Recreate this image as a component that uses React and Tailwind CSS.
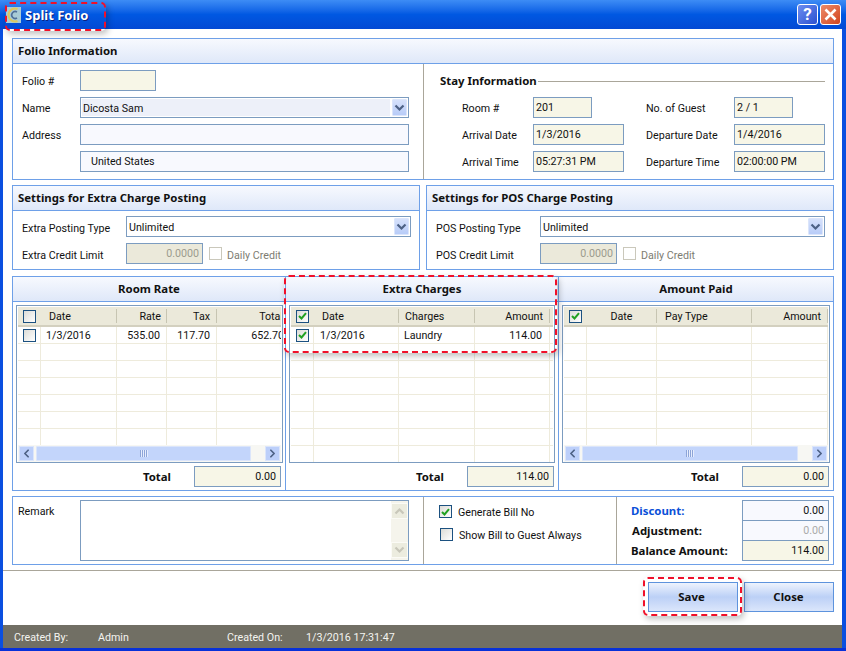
import { ChevronLeft, ChevronRight } from 'lucide-react';

const boldText = "font-['Noto_Sans',sans-serif] font-bold text-[11.4px]";

const Chevron = ({ color = '#4d6185' }) => (
  <svg width="11" height="8" viewBox="0 0 11 8" fill="none" stroke={color} strokeWidth="2.2">
    <path d="M1.5 1.5 L5.5 5.5 L9.5 1.5" />
  </svg>
);

function Check({ checked, disabled, className = '' }) {
  if (disabled) return <span className={'block w-[13px] h-[13px] border border-[#cac8bb] bg-white ' + className} />;
  return (
    <span className={'flex items-center justify-center w-[13px] h-[13px] border border-[#1c5180] bg-gradient-to-br from-[#dcdcd7] to-white ' + className}>
      {checked && (
        <svg width="9" height="8" viewBox="0 0 9 8" fill="none" stroke="#21a121" strokeWidth="2">
          <path d="M1 4 L3.5 6.5 L8 1.2" />
        </svg>
      )}
    </span>
  );
}

function Field({ children, className = '', tone = 'cream', align = 'left' }) {
  const bg = tone === 'cream' ? 'bg-[#f7f6e7]' : tone === 'gray' ? 'bg-[#ebe9da]' : tone === 'white' ? 'bg-white' : 'bg-[#f8f9fe]';
  return (
    <div className={`flex items-center h-[21px] px-[2px] pt-[2px] border border-[#7c9cc0] ${bg} ${align === 'right' ? 'justify-end' : ''} ${className}`}>
      {children}
    </div>
  );
}

function Combo({ text, className = '', bg = 'bg-white' }) {
  return (
    <div className={`flex items-center h-[21px] border border-[#7c9cc0] bg-white pl-px pr-px py-px ${className}`}>
      <div className={`flex-1 h-full flex items-center pl-[1px] pt-[4px] ${bg}`}>{text}</div>
      <div className="flex items-center justify-center w-[15px] h-full ml-[2px] rounded-[1px] border border-[#dbe5fb] bg-gradient-to-b from-[#d6e1fb] to-[#b8ccf8]">
        <Chevron />
      </div>
    </div>
  );
}

function Panel({ title, children, className = '', center }) {
  return (
    <div className={`flex flex-col border border-[#6ea0e8] ${className}`}>
      {title && <PanelHead center={center}>{title}</PanelHead>}
      {children}
    </div>
  );
}

function PanelHead({ children, center }) {
  return (
    <div className={`flex items-center shrink-0 h-[25px] pb-px px-[5px] border-b border-[#6ea0e8] bg-gradient-to-b from-[#f7f9fe] to-[#dfe8f9] ${boldText} ${center ? 'justify-center' : ''}`}>
      {children}
    </div>
  );
}

function InfoRow({ label, labelClass, children }) {
  return (
    <div className="flex items-center">
      <span className={labelClass}>{label}</span>
      {children}
    </div>
  );
}

function HScroll() {
  return (
    <div className="flex items-center h-[17px] gap-[2px] px-[1px] bg-[#f7f7f3]">
      <div className="flex items-center justify-center w-[15px] h-[15px] bg-[#bccffa] border border-[#dbe5fb]">
        <ChevronLeft size={13} strokeWidth={3.2} color="#4d6185" />
      </div>
      <div className="flex-1 flex items-center justify-center h-[15px] rounded-[1px] border border-[#dbe5fb] bg-[#c3d5fb]">
        <div className="w-[8px] h-[7px] bg-[repeating-linear-gradient(90deg,#8da5d8_0,#8da5d8_1px,#e6edfd_1px,#e6edfd_2px)]" />
      </div>
      <div className="w-[10px]" />
      <div className="flex items-center justify-center w-[15px] h-[15px] bg-[#bccffa] border border-[#dbe5fb]">
        <ChevronRight size={13} strokeWidth={3.2} color="#4d6185" />
      </div>
    </div>
  );
}

function Grid({ columns, rows, rowCount, scroll, headCheck, rowCheck }) {
  return (
    <div className="flex flex-col h-full border border-[#7c9cc0] pt-px px-px">
      <div className="flex h-[20px] overflow-hidden border-b-2 border-[#d3d0bf] bg-[#ebe9da]">
        <div className="flex items-center justify-center w-[23px] shrink-0"><Check checked={headCheck} /></div>
        {columns.map((c, k) => (
          <div key={k} className={`flex items-center shrink-0 ${c.w}`}>
            <div className={`flex flex-1 items-center h-[14px] border-r border-[#c7c5b2] ${c.headClass}`}>
              <span className="whitespace-nowrap pt-[2px]">{c.label}</span>
            </div>
          </div>
        ))}
      </div>
      <div className="flex flex-col flex-1 min-h-0 overflow-hidden">
        {Array.from({ length: rowCount }).map((_, i) => (
          <div key={i} className="flex h-[17px] shrink-0 overflow-hidden border-b border-[#eeebdc]">
            <div className="flex items-center justify-center w-[23px] shrink-0 border-r border-[#eeebdc]">
              {rows[i] && <Check checked={rowCheck} />}
            </div>
            {columns.map((c, k) => (
              <div key={k} className={`flex items-center shrink-0 pt-[3px] whitespace-nowrap border-r border-[#eeebdc] ${c.w} ${c.cellClass}`}>
                {rows[i] && rows[i][k]}
              </div>
            ))}
          </div>
        ))}
      </div>
      {scroll && <HScroll />}
    </div>
  );
}

function TotalRow({ value }) {
  return (
    <div className="flex items-center justify-end h-[21px] mt-[3px] pr-[4px]">
      <span className={`mr-[23px] ${boldText}`}>Total</span>
      <Field align="right" className="w-[87px]"><span className="pr-[2px]">{value}</span></Field>
    </div>
  );
}

function SettingsPanel({ title, typeLabel, limitLabel }) {
  return (
    <Panel title={title} className="w-[408px] h-[85px]">
      <div className="flex flex-col gap-[6px] pt-[5px] pl-[9px] pr-[8px]">
        <InfoRow label={typeLabel} labelClass="w-[104px] pt-[5px]">
          <Combo text="Unlimited" className="flex-1" />
        </InfoRow>
        <InfoRow label={limitLabel} labelClass="w-[104px] pt-[5px]">
          <Field tone="gray" align="right" className="w-[77px] text-[#9c9b8e]"><span className="pr-[1px]">0.0000</span></Field>
          <Check disabled className="ml-[6px]" />
          <span className="ml-[5px] pt-[5px] text-[#7d7c72]">Daily Credit</span>
        </InfoRow>
      </div>
    </Panel>
  );
}

const redBox = 'absolute border-2 border-dashed border-[#f0102a] rounded-[5px] shadow-[2px_3px_6px_rgba(0,0,0,0.25)] pointer-events-none';

const roomCols = [
  { label: 'Date', w: 'w-[76px]', headClass: 'justify-start pl-[8px]', cellClass: 'justify-start pl-[5px]' },
  { label: 'Rate', w: 'w-[50px]', headClass: 'justify-end pr-[5px]', cellClass: 'justify-end pr-[6px]' },
  { label: 'Tax', w: 'w-[50px]', headClass: 'justify-end pr-[6px]', cellClass: 'justify-end pr-[6px]' },
  { label: 'Total', w: 'w-[71px]', headClass: 'justify-end pr-[4px]', cellClass: 'justify-end pr-[3px]' },
];
const extraCols = [
  { label: 'Date', w: 'w-[85px]', headClass: 'justify-start pl-[8px]', cellClass: 'justify-start pl-[6px]' },
  { label: 'Charges', w: 'w-[76px]', headClass: 'justify-start pl-[6px]', cellClass: 'justify-start pl-[5px]' },
  { label: 'Amount', w: 'w-[75px]', headClass: 'justify-end pr-[6px]', cellClass: 'justify-end pr-[7px]' },
];
const paidCols = [
  { label: 'Date', w: 'w-[70px]', headClass: 'justify-center', cellClass: '' },
  { label: 'Pay Type', w: 'w-[95px]', headClass: 'justify-start pl-[8px]', cellClass: '' },
  { label: 'Amount', w: 'w-[76px]', headClass: 'justify-end pr-[6px]', cellClass: '' },
];

export default function App() {
  return (
    <div className="relative flex flex-col w-[846px] h-[651px] overflow-hidden bg-[#0a4fe0] text-[10.7px] leading-none text-[#111] font-['Roboto',sans-serif]">
      {/* Title bar */}
      <div className="flex items-center shrink-0 h-[29px] pl-[6px] pr-[5px] bg-gradient-to-b from-[#3d8cf5] via-[#0058e2] to-[#0349d4]">
        <svg width="15" height="16" viewBox="0 0 15 16" fill="none">
          <rect width="15" height="16" fill="#a9cbd6" />
          <path d="M11.5 2 A6.5 6.5 0 1 0 11.5 14" stroke="#dcc85e" strokeWidth="2" />
          <path d="M11 5 A3.5 3.5 0 1 0 11 11" stroke="#4f6f99" strokeWidth="1.6" />
        </svg>
        <span className="ml-[4px] pt-px font-['Noto_Sans',sans-serif] font-bold text-[13px] text-white [text-shadow:1px_1px_0_#0a1f80]">Split Folio</span>
        <div className="ml-auto flex gap-[2px]">
          <div className="flex items-center justify-center w-[21px] h-[21px] rounded-[3px] border border-white bg-gradient-to-br from-[#6d8df0] to-[#2b50d0] text-white font-bold text-[17px]">?</div>
          <div className="flex items-center justify-center w-[21px] h-[21px] rounded-[3px] border border-white bg-gradient-to-br from-[#ec8a68] to-[#d2431c]">
            <svg width="13" height="13" viewBox="0 0 13 13" stroke="white" strokeWidth="2.6"><path d="M1.5 1.5 L11.5 11.5 M11.5 1.5 L1.5 11.5" /></svg>
          </div>
        </div>
      </div>

      {/* Window body */}
      <div className="flex flex-col flex-1 min-h-0 ml-[3px] mr-[4px] bg-white">
        <div className="flex flex-col pt-[9px] pl-[9px] pr-[8px]">
          {/* Folio + Stay */}
          <Panel title="Folio Information" className="h-[142px]">
            <div className="flex flex-1 min-h-0">
              <div className="flex flex-col gap-[6px] w-[411px] pt-[6px] pl-[9px] pr-[14px] border-r border-[#aaa69a]">
                <InfoRow label="Folio #" labelClass="w-[58px] pt-[3px]"><Field className="w-[76px]" /></InfoRow>
                <InfoRow label="Name" labelClass="w-[58px] pt-[3px]"><Combo text="Dicosta Sam" className="flex-1" bg="bg-[#edf0f9]" /></InfoRow>
                <InfoRow label="Address" labelClass="w-[58px] pt-[3px]"><Field tone="pale" className="flex-1" /></InfoRow>
                <InfoRow label="" labelClass="w-[58px]"><Field tone="pale" className="flex-1 pl-[10px]">United States</Field></InfoRow>
              </div>
              <div className="flex-1 flex flex-col pt-[11px] pl-[16px] pr-[8px]">
                <div className={`flex items-center h-[12px] ${boldText}`}>
                  <span>Stay Information</span>
                  <span className="flex-1 h-px ml-[1px] bg-[#aaa69a]" />
                </div>
                <div className="grid grid-cols-[206px_1fr] gap-y-[6px] mt-[10px]">
                  <div className="flex items-center pl-[22px]"><span className="w-[71px] pt-[4px]">Room #</span><Field className="w-[59px]">201</Field></div>
                  <div className="flex items-center"><span className="w-[88px] pt-[4px]">No. of Guest</span><Field className="w-[59px]">2 / 1</Field></div>
                  <div className="flex items-center pl-[22px]"><span className="w-[71px] pt-[4px]">Arrival Date</span><Field className="w-[91px]">1/3/2016</Field></div>
                  <div className="flex items-center"><span className="w-[88px] pt-[4px]">Departure Date</span><Field className="w-[91px]">1/4/2016</Field></div>
                  <div className="flex items-center pl-[22px]"><span className="w-[71px] pt-[4px]">Arrival Time</span><Field className="w-[91px]">05:27:31 PM</Field></div>
                  <div className="flex items-center"><span className="w-[88px] pt-[4px]">Departure Time</span><Field className="w-[91px]">02:00:00 PM</Field></div>
                </div>
              </div>
            </div>
          </Panel>

          {/* Posting settings */}
          <div className="flex gap-[6px] mt-[5px]">
            <SettingsPanel title="Settings for Extra Charge Posting" typeLabel="Extra Posting Type" limitLabel="Extra Credit Limit" />
            <SettingsPanel title="Settings for POS Charge Posting" typeLabel="POS Posting Type" limitLabel="POS Credit Limit" />
          </div>

          {/* Charge grids */}
          <Panel className="h-[215px] mt-[6px]">
            <div className="flex flex-1 min-h-0">
              <div className="flex flex-col w-[273px] border-r border-[#6ea0e8]">
                <PanelHead center>Room Rate</PanelHead>
                <div className="h-[158px] mt-[3px] pl-[3px] pr-[2px]">
                  <Grid columns={roomCols} rows={[['1/3/2016', '535.00', '117.70', '652.70']]} rowCount={7} scroll headCheck={false} rowCheck={false} />
                </div>
                <TotalRow value="0.00" />
              </div>
              <div className="flex flex-col w-[273px] border-r border-[#6ea0e8]">
                <PanelHead center>Extra Charges</PanelHead>
                <div className="h-[158px] mt-[3px] pl-[3px] pr-[3px]">
                  <Grid columns={extraCols} rows={[['1/3/2016', 'Laundry', '114.00']]} rowCount={8} headCheck rowCheck />
                </div>
                <TotalRow value="114.00" />
              </div>
              <div className="flex flex-col flex-1 min-w-0">
                <PanelHead center>Amount Paid</PanelHead>
                <div className="h-[158px] mt-[3px] pl-[3px] pr-[3px]">
                  <Grid columns={paidCols} rows={[]} rowCount={7} scroll headCheck />
                </div>
                <TotalRow value="0.00" />
              </div>
            </div>
          </Panel>

          {/* Remark + totals */}
          <Panel className="flex-row! h-[69px] mt-[5px]">
            <div className="flex w-[411px] pt-[3px] pl-[5px] pr-[14px] border-r border-[#aaa69a]">
              <span className="w-[62px] pt-[7px]">Remark</span>
              <div className="flex-1 flex justify-end h-[61px] border border-[#7c9cc0] bg-white">
                <div className="flex flex-col justify-between w-[17px] py-[2px] bg-[#f5f4ec]">
                  <div className="flex items-center justify-center h-[16px] bg-[#ececdf] border border-[#fbfbf6] rotate-180"><Chevron color="#c8c7ba" /></div>
                  <div className="flex items-center justify-center h-[16px] bg-[#ececdf] border border-[#fbfbf6]"><Chevron color="#c8c7ba" /></div>
                </div>
              </div>
            </div>
            <div className="flex flex-col w-[193px] pt-[8px] pl-[15px] border-r border-[#aaa69a]">
              <div className="flex items-center h-[13px]"><Check checked /><span className="ml-[6px] pt-[4px]">Generate Bill No</span></div>
              <div className="flex items-center h-[13px] mt-[10px] pl-px"><Check /><span className="ml-[6px] pt-[4px]">Show Bill to Guest Always</span></div>
            </div>
            <div className={`flex-1 flex flex-col pt-[3px] pl-[14px] pr-[4px] ${boldText}`}>
              <div className="flex items-center justify-between h-[20px]"><span className="pt-px text-[#0a50d8]">Discount:</span><Field tone="pale" align="right" className="w-[87px] h-[21px] font-['Roboto',sans-serif] font-normal text-[10.7px]"><span className="pr-[2px]">0.00</span></Field></div>
              <div className="flex items-center justify-between h-[20px] pl-px"><span className="pt-px">Adjustment:</span><Field tone="pale" align="right" className="w-[87px] h-[21px] font-['Roboto',sans-serif] font-normal text-[10.7px] text-[#aaa]"><span className="pr-[2px]">0.00</span></Field></div>
              <div className="flex items-center justify-between h-[20px]"><span className="pt-px">Balance Amount:</span><Field align="right" className="w-[87px] h-[21px] font-['Roboto',sans-serif] font-normal text-[10.7px]"><span className="pr-[2px]">114.00</span></Field></div>
            </div>
          </Panel>
        </div>

        <div className="h-px mt-[5px] bg-[#aaa69a]" />

        {/* Buttons */}
        <div className={`flex justify-end gap-[6px] pt-[11px] pr-[8px] h-[54px] ${boldText}`}>
          <button className="w-[90px] h-[30px] pr-[3px] border border-[#5d93dd] bg-gradient-to-b from-[#eef3fd] via-[#bcd0f6] to-[#dbe6fb] text-[#111]">Save</button>
          <button className="w-[90px] h-[30px] pr-px border border-[#5d93dd] bg-gradient-to-b from-[#eef3fd] via-[#bcd0f6] to-[#dbe6fb] text-[#111]">Close</button>
        </div>

        {/* Status bar */}
        <div className="flex items-center shrink-0 h-[23px] pt-[4px] pl-[11px] bg-[#716f64] text-[#f4f4f0]">
          <span className="w-[84px]">Created By:</span>
          <span className="w-[129px]">Admin</span>
          <span className="w-[79px]">Created On:</span>
          <span>1/3/2016 17:31:47</span>
        </div>
      </div>
      <div className="shrink-0 h-[3px] bg-[#0831d9]" />

      {/* Red callouts */}
      <div className={redBox + ' left-[5px] top-[2px] w-[101px] h-[29px]'} />
      <div className={redBox + ' left-[284px] top-[275px] w-[273px] h-[78px]'} />
      <div className={redBox + ' left-[643px] top-[577px] w-[99px] h-[39px]'} />
    </div>
  );
}
